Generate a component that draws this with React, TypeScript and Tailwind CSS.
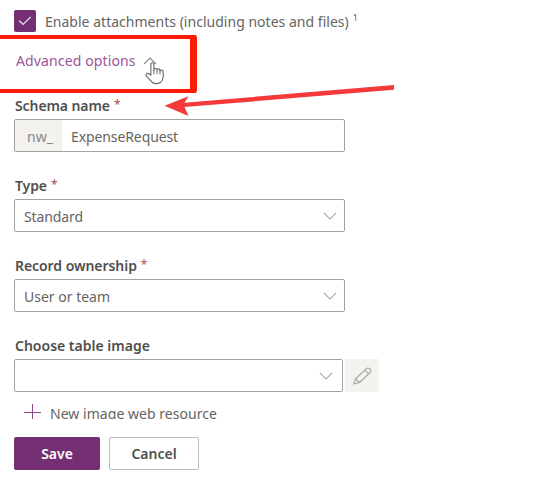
import type { ReactNode } from "react";

function Chevron({ up = false, className = "" }: { up?: boolean; className?: string }) {
  return (
    <svg width="14" height="8" viewBox="0 0 14 8" fill="none" className={`shrink-0 ${className}`}>
      <path d={up ? "M1 7 L7 1 L13 7" : "M1 1 L7 7 L13 1"} stroke="currentColor" strokeWidth="1.1" />
    </svg>
  );
}

function Label({ children, required = false, className = "" }: { children: string; required?: boolean; className?: string }) {
  return (
    <div className="flex h-[28px] items-center whitespace-nowrap pl-px text-[14px] font-semibold text-[#504f4e]">
      <span className={className}>{children}</span>
      {required && <span className="ml-[4px] text-[12px] font-normal text-[#b04a4c]">*</span>}
    </div>
  );
}

function Field({ children, className = "" }: { children?: ReactNode; className?: string }) {
  return (
    <div className={`flex h-[33px] items-center rounded-[2px] border border-[#a3a2a1] text-[14px] text-[#666462] ${className}`}>
      {children}
    </div>
  );
}

function HandCursor() {
  return (
    <svg width="20" height="23" viewBox="0 0 20 23" className="absolute left-[145px] top-[62px]">
      <path
        d="M5.9 13.2 V2.4 Q5.9 .8 7.4 .8 Q8.9 .8 8.9 2.4 V8 Q8.9 6.3 10.4 6.3 Q12 6.4 12 8.2 Q12.2 6.8 13.6 6.9 Q15 7 15 8.9 Q15.5 7.9 16.8 8.1 Q18.2 8.5 18.2 10 V14.8 Q18 18 15.8 20.2 Q13.4 21.9 10 21.6 Q7.8 21.3 6.3 19.4 L1.5 14.2 Q.3 12.7 1.7 11.6 Q3 10.9 4.3 12 Z"
        fill="#fff" stroke="#666" strokeWidth="1.1" strokeLinejoin="round"
      />
      <path d="M8.9 8 V12.2 M12 8.2 V12.2 M15 8.9 V12.5" fill="none" stroke="#666" strokeWidth="1" />
    </svg>
  );
}

export default function App() {
  return (
    <main className="relative h-[483px] w-[547px] overflow-hidden bg-white font-['Noto_Sans','Open_Sans',sans-serif]">
      <div className="flex flex-col pl-[14px]">
        <div className="mt-[10px] flex h-[22px] items-center whitespace-nowrap text-[14px] text-[#666462]">
          <div className="flex size-[22px] items-center justify-center rounded-[2px] bg-[#742f72]">
            <svg width="14" height="10" viewBox="0 0 14 10" fill="none"><path d="M1.2 4.8 L5 8.5 L12.8 .9" stroke="#eee" strokeWidth="1.2" /></svg>
          </div>
          <span className="ml-[9px] tracking-[0.02px]">Enable attachments (including notes and files)</span>
          <span className="ml-[4px] -mt-[7px] text-[9px]">1</span>
        </div>
        <div className="mt-[14px] flex h-[29px] items-center text-[14px] text-[#9b559a]">
          <span className="ml-[2px] w-[118px] whitespace-nowrap tracking-[0.13px]">Advanced options</span>
          <Chevron up className="ml-[9px] text-[#888]" />
        </div>
        <div className="mt-[16px]"><Label required className="tracking-[-0.09px]">Schema name</Label></div>
        <Field className="w-[331px]">
          <div className="flex h-full w-[47px] items-center bg-[#f3f2ef] pl-[12px] pt-px text-[#8a8886]">nw_</div>
          <span className="ml-[9px] pt-[2px] tracking-[-0.1px]">ExpenseRequest</span>
        </Field>
        <div className="mt-[19px]"><Label required className="tracking-[-0.1px]">Type</Label></div>
        <Field className="w-[331px] justify-between pl-[9px] pr-[7px]"><span className="pt-[2px] tracking-[-0.1px]">Standard</span><Chevron className="text-[#aaa]" /></Field>
        <div className="mt-[19px]"><Label required className="tracking-[-0.06px]">Record ownership</Label></div>
        <Field className="w-[331px] justify-between pl-[9px] pr-[7px]"><span className="pt-[2px]">User or team</span><Chevron className="text-[#aaa]" /></Field>
        <div className="mt-[19px]"><Label>Choose table image</Label></div>
        <div className="flex gap-[2px]">
          <Field className="w-[329px] justify-end pr-[9px]"><Chevron className="text-[#aaa]" /></Field>
          <button className="flex h-[33px] w-[34px] items-center justify-center bg-[#f3f2ef]">
            <svg width="19" height="18" viewBox="0 0 19 18" fill="none" stroke="#aaa8a6" strokeWidth="1.2" strokeLinejoin="round">
              <path d="M1 17 L2.6 11.7 L13.1 1.9 Q14.7 .5 16.8 1.8 Q18.7 3.4 17.2 5.5 L6.4 15.5 Z M2.6 11.7 L6.4 15.5 M11.9 3.1 L15.8 7" />
            </svg>
          </button>
        </div>
        <div className="mt-[10px] flex h-[17px] items-start overflow-hidden pl-[10px] text-[14px] text-[#666462]">
          <svg width="17" height="17" viewBox="0 0 17 17" fill="none" className="shrink-0"><path d="M8.5 2 V17 M0 10.5 H17" stroke="#8a4b88" strokeWidth="1" /></svg>
          <span className="ml-[9px] whitespace-nowrap leading-[24px] tracking-[0.04px]">New image web resource</span>
        </div>
        <div className="mt-[18px] flex gap-[9px] text-[14px] font-semibold">
          <button className="h-[33px] w-[86px] rounded-[2px] bg-[#742f72] text-white">Save</button>
          <button className="h-[33px] w-[90px] rounded-[2px] border border-[#bdbcbb] text-[#504f4e]">Cancel</button>
        </div>
      </div>
      <div className="absolute -left-[10px] top-[35px] h-[58px] w-[207px] rounded-[3px] border-y-4 border-r-[7px] border-[#ff1c05]" />
      <HandCursor />
      <svg width="232" height="36" viewBox="0 0 232 36" className="absolute left-[164px] top-[83px]">
        <path d="M230 2 V6.8 L20.5 24 L24.5 33 L.5 22.8 L24.5 13.2 L20.5 19.7 Z" fill="#f43a3a" />
      </svg>
    </main>
  );
}
